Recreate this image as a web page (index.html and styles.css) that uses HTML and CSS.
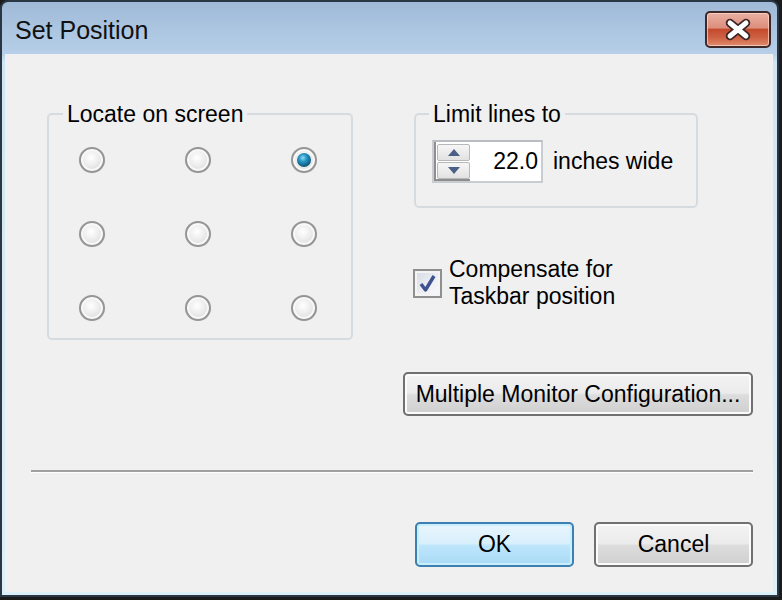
FILE: index.html
```html
<!DOCTYPE html>
<html>
<head>
<meta charset="utf-8">
<link rel="stylesheet" href="styles.css">
</head>
<body>
<div class="window">
  <div class="titlebar">
    <span class="title">Set Position</span>
    <span class="close">
      <svg width="66" height="37" viewBox="0 0 66 37">
        <path d="M25 12 L41 25 M41 12 L25 25" stroke="#3a2424" stroke-width="8.5" stroke-linecap="round" fill="none"/>
        <path d="M25 12 L41 25 M41 12 L25 25" stroke="#ffffff" stroke-width="5" stroke-linecap="round" fill="none"/>
      </svg>
    </span>
  </div>
  <div class="client">
    <div class="top">
      <fieldset class="group locate">
        <legend>Locate on screen</legend>
        <div class="radios">
          <span class="radio"></span><span class="radio"></span><span class="radio checked"></span>
          <span class="radio"></span><span class="radio"></span><span class="radio"></span>
          <span class="radio"></span><span class="radio"></span><span class="radio"></span>
        </div>
      </fieldset>
      <div class="right">
        <fieldset class="group limit">
          <legend>Limit lines to</legend>
          <div class="limit-row">
            <div class="spin">
              <div class="spin-btns">
                <span class="spin-btn"><svg width="12" height="7" viewBox="0 0 12 7"><path d="M0 7 L6 0 L12 7 Z" fill="#4b5f87"/></svg></span>
                <span class="spin-btn"><svg width="12" height="7" viewBox="0 0 12 7"><path d="M0 0 L6 7 L12 0 Z" fill="#4b5f87"/></svg></span>
              </div>
              <div class="spin-val">22.0</div>
            </div>
            <span class="unit">inches wide</span>
          </div>
        </fieldset>
        <div class="check-row">
          <span class="checkbox">
            <svg width="25" height="25" viewBox="0 0 25 25"><path d="M6 13 L10.5 19 L19 5" stroke="#3f5290" stroke-width="3.4" fill="none" stroke-linejoin="round"/></svg>
          </span>
          <span class="check-text">Compensate for<br>Taskbar position</span>
        </div>
        <button class="btn multi">Multiple Monitor Configuration...</button>
      </div>
    </div>
    <div class="sep"></div>
    <div class="actions">
      <button class="btn default">OK</button>
      <button class="btn">Cancel</button>
    </div>
  </div>
</div>
</body>
</html>
```
FILE: styles.css
```css
html, body {
  margin: 0;
  padding: 0;
}
body {
  width: 782px;
  height: 600px;
  overflow: hidden;
  background: #1b1b1b;
  font-family: "Liberation Sans", Arial, sans-serif;
  font-size: 23px;
  color: #000;
}
.window {
  width: 779px;
  height: 597px;
  box-sizing: border-box;
  border: 2px solid #2a3644;
  border-radius: 8px 8px 0 0;
  background: linear-gradient(to bottom, #9fbad8 0, #b7cfe8 52px, #cfe5f3 60px, #dcf0f9 100%);
  display: flex;
  flex-direction: column;
}
.titlebar {
  height: 52px;
  display: flex;
  align-items: flex-start;
  justify-content: space-between;
  flex: none;
}
.title {
  font-size: 25px;
  margin: 14px 0 0 13px;
  color: #111;
}
.close {
  width: 66px;
  height: 37px;
  margin: 9px 6px 0 0;
  box-sizing: border-box;
  border: 2px solid #3f2828;
  border-radius: 5px;
  background: linear-gradient(to bottom, #eab0a2 0%, #dc8e7b 45%, #c44a2e 50%, #cf6244 75%, #df8c6c 100%);
  box-shadow: inset 0 0 0 1px rgba(255, 220, 210, 0.7);
  display: flex;
  align-items: center;
  justify-content: center;
  overflow: hidden;
}
.close svg {
  flex: none;
}
.client {
  flex: 1;
  margin: 0 4px 3px 3px;
  background: #f0f0f0;
  padding: 0 20px 25px 26px;
  display: flex;
  flex-direction: column;
}
.top {
  display: flex;
  align-items: flex-start;
  padding-top: 47px;
}
.group {
  margin: 0;
  padding: 0;
  border: 2px solid #d6dbe0;
  border-radius: 5px;
  min-width: 0;
}
.group legend {
  padding: 0 4px;
  line-height: 26px;
}
.locate {
  margin-left: 16px;
  width: 306px;
  box-sizing: border-box;
}
.locate legend {
  margin-left: 14px;
}
.radios {
  display: grid;
  grid-template-columns: repeat(3, 26px);
  grid-auto-rows: 26px;
  column-gap: 80px;
  row-gap: 48px;
  padding: 20px 0 17px 30px;
}
.radio {
  width: 26px;
  height: 26px;
  box-sizing: border-box;
  border-radius: 50%;
  border: 2px solid #959595;
  background: radial-gradient(circle at 45% 40%, #ffffff 0, #ececec 45%, #cdcdcd 100%);
  box-shadow: inset 0 0 0 2px #f8f8f8, 0 0 1px #e0e0e0;
  display: flex;
  align-items: center;
  justify-content: center;
}
.radio.checked::after {
  content: "";
  width: 14px;
  height: 14px;
  border-radius: 50%;
  background: radial-gradient(circle at 42% 35%, #8fdcf5 0, #2a98c8 30%, #0d5a7e 70%, #083a55 100%);
}
.right {
  flex: 1;
  margin-left: 50px;
  display: flex;
  flex-direction: column;
}
.limit {
  margin-left: 11px;
  margin-right: 55px;
}
.limit legend {
  margin-left: 13px;
}
.limit-row {
  display: flex;
  align-items: center;
  gap: 10px;
  padding: 13px 0 23px 16px;
}
.spin {
  width: 111px;
  height: 43px;
  box-sizing: border-box;
  border: 2px solid #c9cdd1;
  border-top-color: #b9bdc2;
  background: #fff;
  display: flex;
}
.spin-btns {
  width: 36px;
  display: flex;
  flex-direction: column;
  border-left: 2px solid #8e8e8e;
  border-bottom: 2px solid #8e8e8e;
  box-sizing: border-box;
  padding: 2px 0 0 1px;
  gap: 1px;
}
.spin-btn {
  flex: 1;
  border: 1px solid #b8b8b8;
  border-radius: 2px;
  background: linear-gradient(to bottom, #f6f6f6, #e2e2e2);
  display: flex;
  align-items: center;
  justify-content: center;
}
.spin-val {
  flex: 1;
  text-align: right;
  padding-right: 3px;
  line-height: 39px;
}
.check-row {
  display: flex;
  align-items: center;
  gap: 7px;
  margin: 48px 0 0 10px;
}
.checkbox {
  width: 29px;
  height: 29px;
  box-sizing: border-box;
  border: 2px solid #8e8f8f;
  background: linear-gradient(135deg, #d5d9e2 0%, #eef0f4 60%, #f8f9fb 100%);
  box-shadow: inset 0 0 0 2px #f4f4f4;
  display: flex;
  align-items: center;
  justify-content: center;
}
.check-text {
  line-height: 27px;
}
.btn {
  font-family: "Liberation Sans", Arial, sans-serif;
  font-size: 23px;
  color: #000;
  box-sizing: border-box;
  border: 2px solid #707070;
  border-radius: 5px;
  background: linear-gradient(to bottom, #f3f3f3 0%, #ebebeb 48%, #dddddd 52%, #cfcfcf 100%);
  box-shadow: inset 0 0 0 2px #fbfbfb;
  padding: 0;
}
.multi {
  margin-top: 62px;
  height: 44px;
  width: 350px;
}
.sep {
  margin-top: 54px;
  border-top: 2px solid #a0a0a0;
  border-bottom: 1px solid #ffffff;
}
.actions {
  margin-top: 49px;
  display: flex;
  justify-content: flex-end;
  gap: 20px;
}
.actions .btn {
  width: 159px;
  height: 45px;
}
.btn.default {
  border-color: #3c7fb1;
  background: linear-gradient(to bottom, #e9f6fd 0%, #d8effc 48%, #bee6fd 52%, #a9daf5 100%);
  box-shadow: inset 0 0 0 2px #cbeefc;
}
```
